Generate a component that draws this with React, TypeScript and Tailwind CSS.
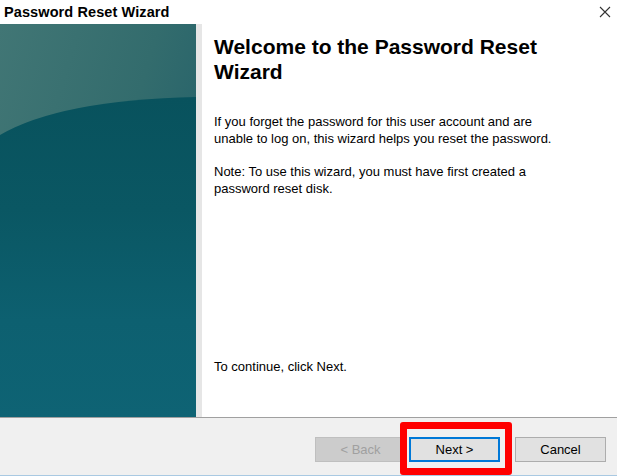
export default function App() {
  return (
    <div
      className="relative w-[617px] h-[476px] flex flex-col bg-white text-black overflow-hidden"
      style={{ fontFamily: '"Liberation Sans", Arial, sans-serif' }}
    >
      {/* title bar */}
      <div className="h-[24px] flex items-center justify-between pl-[4px] pr-[6px] bg-white">
        <span className="text-[14.5px] font-bold leading-none tracking-[0.1px]">Password Reset Wizard</span>
        <svg width="12" height="12" viewBox="0 0 12 12" className="mr-[0px]">
          <path d="M1 1L11 11M11 1L1 11" stroke="#333" strokeWidth="1.1" />
        </svg>
      </div>

      {/* body */}
      <div className="h-[393px] flex">
        <div className="w-[196px] h-full shrink-0">
          <svg width="196" height="393" viewBox="0 0 196 393">
            <defs>
              <linearGradient id="topG" x1="0" y1="0" x2="1" y2="0.6">
                <stop offset="0" stopColor="#417675" />
                <stop offset="0.6" stopColor="#336c6d" />
                <stop offset="1" stopColor="#24616a" />
              </linearGradient>
              <linearGradient id="botG" x1="0" y1="0" x2="0" y2="1">
                <stop offset="0" stopColor="#08525d" />
                <stop offset="0.35" stopColor="#0a5763" />
                <stop offset="0.7" stopColor="#0d6070" />
                <stop offset="1" stopColor="#0e6374" />
              </linearGradient>
            </defs>
            <rect x="0" y="0" width="196" height="393" fill="url(#topG)" />
            <path d="M0 111 Q60 76 196 73 L196 393 L0 393 Z" fill="url(#botG)" />
          </svg>
        </div>
        <div className="w-[6px] h-full bg-[#e6e6e6]" />
        <div className="flex-1 flex flex-col pl-[12px] pt-[10px] pb-[42px]">
          <h1 className="text-[21px] leading-[25px] font-bold">
            Welcome to the Password Reset
            <br />
            Wizard
          </h1>
          <p className="mt-[29px] text-[13px] leading-[17px]">
            If you forget the password for this user account and are
            <br />
            unable to log on, this wizard helps you reset the password.
          </p>
          <p className="mt-[16px] text-[13px] leading-[17px]">
            Note: To use this wizard, you must have first created a
            <br />
            password reset disk.
          </p>
          <p className="mt-auto text-[13px] leading-[17px]">To continue, click Next.</p>
        </div>
      </div>

      {/* footer */}
      <div className="h-px bg-[#a0a0a0]" />
      <div className="flex-1 bg-[#f0f0f0] flex justify-end items-start pt-[19px] pr-[11px]">
        <div className="flex">
          <button className="w-[91px] h-[25px] bg-[#cccccc] border border-[#bfbfbf] text-[13px] text-[#a0a0a0]">
            &lt; Back
          </button>
          <button className="ml-[3px] w-[91px] h-[25px] bg-[#e1e1e1] border-2 border-[#0078d7] text-[13px] text-black">
            Next &gt;
          </button>
          <button className="ml-[15px] w-[91px] h-[25px] bg-[#e1e1e1] border border-[#adadad] text-[13px] text-black">
            Cancel
          </button>
        </div>
      </div>
      <div className="h-px bg-[#a9c9e2]" />

      {/* red highlight annotation */}
      <div className="absolute left-[400px] top-[422px] w-[112px] h-[53px] border-[7px] border-[#ff0000] rounded-[3px]" />
    </div>
  );
}
